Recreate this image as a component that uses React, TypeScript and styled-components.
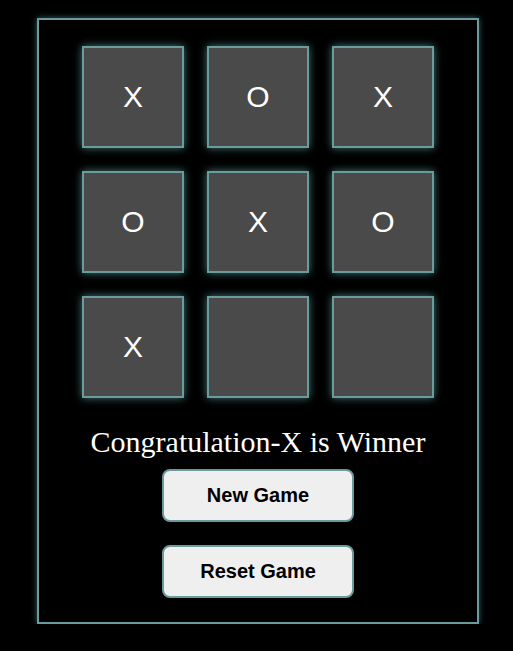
import React from "react";
import styled, { createGlobalStyle } from "styled-components";

const Global = createGlobalStyle`
  html, body { margin: 0; padding: 0; background: #000; }
  body { font-family: "Liberation Serif", "Times New Roman", serif; }
`;

const Frame = styled.div`
  box-sizing: border-box;
  width: 442px;
  margin: 18px 0 0 37px;
  border: 2px solid #6a9c9d;
  box-shadow: 0 0 6px rgba(95, 158, 160, 0.6);
  padding: 26px 0 24px;
  display: flex;
  flex-direction: column;
  align-items: center;
`;

const Board = styled.div`
  display: grid;
  grid-template-columns: repeat(3, 102px);
  grid-auto-rows: 102px;
  gap: 23px;
`;

const Cell = styled.div`
  box-sizing: border-box;
  background: #4a4a4a;
  border: 2px solid #6a9c9d;
  box-shadow: 0 0 8px rgba(95, 158, 160, 0.75);
  display: flex;
  align-items: center;
  justify-content: center;
  color: #fff;
  font-family: "Liberation Sans", Arial, sans-serif;
  font-size: 30px;
`;

const Message = styled.div`
  margin-top: 26px;
  color: #fff;
  font-family: "Liberation Serif", "Times New Roman", serif;
  font-size: 30px;
  line-height: 35px;
`;

const Button = styled.button<{ $first?: boolean }>`
  box-sizing: border-box;
  width: 192px;
  height: 53px;
  margin-top: ${(p) => (p.$first ? "10px" : "23px")};
  background: #efefef;
  border: 2px solid #6a9c9d;
  border-radius: 8px;
  font-family: "Liberation Sans", Arial, sans-serif;
  font-weight: bold;
  font-size: 20px;
  color: #000;
  cursor: pointer;
`;

const cells = ["X", "O", "X", "O", "X", "O", "X", "", ""];

export default function App() {
  return (
    <>
      <Global />
      <Frame>
        <Board>
          {cells.map((c, i) => (
            <Cell key={i}>{c}</Cell>
          ))}
        </Board>
        <Message>Congratulation-X is Winner</Message>
        <Button $first>New Game</Button>
        <Button>Reset Game</Button>
      </Frame>
    </>
  );
}
